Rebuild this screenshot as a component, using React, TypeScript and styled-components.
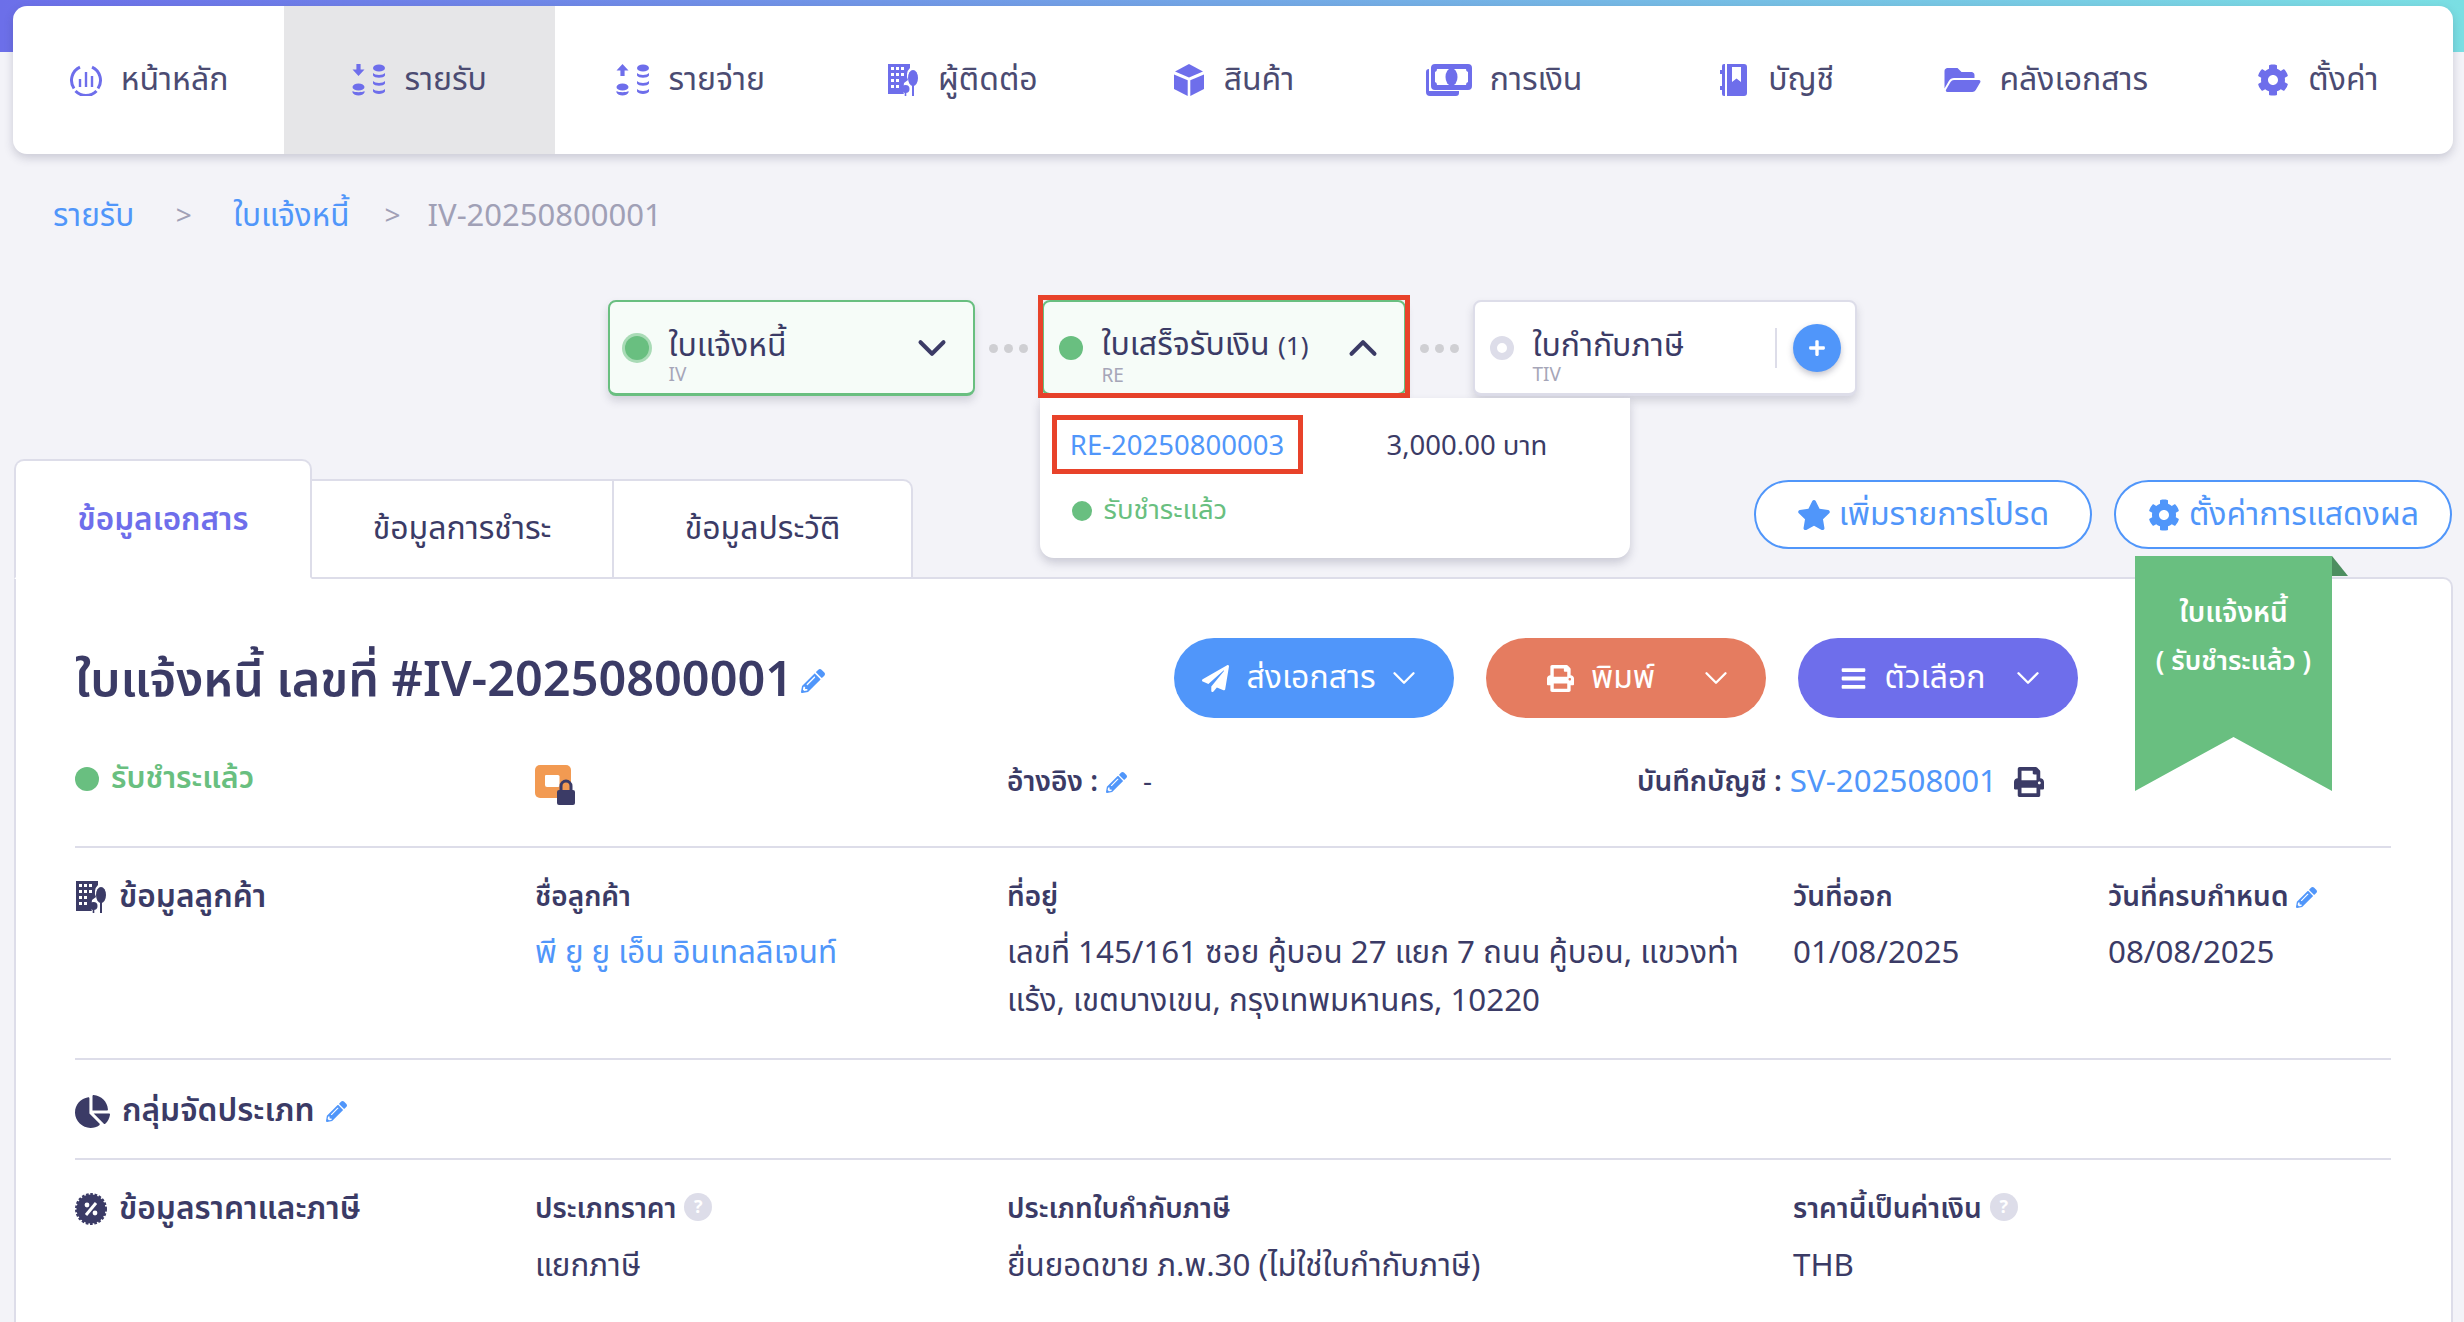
import React from "react";
import styled, { createGlobalStyle } from "styled-components";
import { FaFolderOpen, FaCog, FaPrint, FaPaperPlane, FaStar, FaPencilAlt, FaChartPie, FaBars, FaPlus } from "react-icons/fa";
import { ChevronDown, ChevronUp } from "lucide-react";

const FONT = `"Noto Sans Thai", "Noto Sans", "Open Sans", "DejaVu Sans", sans-serif`;
const INK = "#3b3b66";
const BLUE = "#5096fa";
const GREEN = "#69bf80";
const PURPLE = "#6e6eeb";
const LINE = "#dddde9";

const Global = createGlobalStyle`
  html, body { margin: 0; height: 1322px; overflow: hidden; }
  body { font-family: ${FONT}; color: ${INK}; }
  * { box-sizing: border-box; }
`;

const Page = styled.div`
  height: 1322px;
  overflow: hidden;
  padding-top: 6px;
  background: linear-gradient(90deg, #6c6fe9, #7adfe3) top / 100% 52px no-repeat, #f3f3f8;
`;
const Nav = styled.nav`
  display: grid;
  grid-template-columns: repeat(9, 1fr);
  height: 148px;
  margin: 0 11px 0 13px;
  background: #fff;
  border-radius: 14px;
  overflow: hidden;
  box-shadow: 0 4px 10px rgba(60, 60, 90, 0.22);
`;
const NavItem = styled.div<{ $active?: boolean }>`
  display: flex;
  align-items: center;
  justify-content: center;
  gap: 18px;
  font-size: 32px;
  color: #4b4b72;
  background: ${(p) => (p.$active ? "#e6e6e8" : "transparent")};
  svg { color: ${PURPLE}; width: 34px; height: 32px; flex: none; }
  svg.wide { width: 46px; }
  svg.folder { width: 37px; height: 32px; }
`;
const Breadcrumb = styled.div`
  display: flex;
  align-items: center;
  height: 40px;
  margin: 42px 0 -1px 53px;
  font-size: 31px;
  color: #a0a0b6;
`;
const Crumb = styled.span`
  font-size: 31.5px;
  color: ${BLUE};
`;
const Sep = styled.span<{ $w: number; $shift?: number }>`
  width: ${(p) => p.$w}px;
  padding-left: ${(p) => p.$shift ?? 0}px;
  text-align: center;
  font-size: 28px;
`;
const Stepper = styled.div`
  display: flex;
  justify-content: center;
  align-items: center;
  gap: 14px;
  margin-top: 65px;
  height: 96px;
`;
const StepCard = styled.div<{ $w: number; $done?: boolean }>`
  position: relative;
  display: flex;
  align-items: center;
  width: ${(p) => p.$w}px;
  height: 96px;
  padding: 0 16px 0 15px;
  background: ${(p) => (p.$done ? "#f6fcf8" : "#fff")};
  border: 2px solid ${(p) => (p.$done ? GREEN : LINE)};
  border-bottom-width: 3px;
  border-radius: 8px;
  box-shadow: 0 5px 9px rgba(60, 60, 90, 0.18);
`;
const Dot = styled.span<{ $ring?: boolean; $gap: number; $size?: number }>`
  flex: none;
  width: ${(p) => p.$size ?? 24}px;
  height: ${(p) => p.$size ?? 24}px;
  margin-right: ${(p) => p.$gap}px;
  border-radius: 50%;
  background: ${GREEN};
  box-shadow: ${(p) => (p.$ring ? "0 0 0 3px rgba(105,191,128,.55)" : "none")};
`;
const HollowDot = styled.span`
  flex: none;
  width: 24px;
  height: 24px;
  margin-right: 19px;
  border-radius: 50%;
  border: 7px solid ${LINE};
`;
const StepText = styled.div`
  display: flex;
  flex-direction: column;
  flex: 1;
  padding-top: 16px;
`;
const StepTitle = styled.span`
  font-size: 32px;
  line-height: 40px;
  color: ${INK};
`;
const StepCount = styled.span`
  font-size: 26px;
`;
const StepSub = styled.span`
  font-size: 19px;
  line-height: 20px;
  color: #a6a6b8;
`;
const Chevron = styled.span`
  display: flex;
  margin-right: 2px;
  color: ${INK};
  svg { width: 46px; height: 46px; stroke-width: 2.1; }
`;
const Dots = styled.div`
  display: flex;
  gap: 6px;
  span { width: 9px; height: 9px; border-radius: 50%; background: #cfcfd3; }
`;
const AddDivider = styled.span`
  width: 2px;
  height: 40px;
  margin: 0 16px 0 0;
  background: ${LINE};
`;
const AddButton = styled.span`
  display: flex;
  align-items: center;
  justify-content: center;
  flex: none;
  width: 48px;
  height: 48px;
  margin-right: -2px;
  border-radius: 50%;
  background: ${BLUE};
  color: #fff;
  box-shadow: 0 3px 6px rgba(60, 60, 90, 0.3);
  svg { width: 18px; height: 18px; }
`;
const RedBox = styled.div`
  position: absolute;
  left: -6px;
  right: -6px;
  top: -7px;
  bottom: -5px;
  border: 5px solid #e8422a;
  pointer-events: none;
`;
const Dropdown = styled.div`
  position: absolute;
  z-index: 5;
  top: 96px;
  left: -4px;
  width: 590px;
  height: 160px;
  background: #fff;
  border-radius: 0 0 14px 14px;
  box-shadow: 0 5px 10px rgba(60, 60, 90, 0.22);
`;
const DropRow = styled.div`
  display: flex;
  align-items: center;
  height: 59px;
  margin: 17px 0 0 12px;
`;
const DocBox = styled.div`
  display: flex;
  align-items: center;
  justify-content: center;
  width: 251px;
  height: 59px;
  padding-top: 3px;
  border: 5px solid #e8422a;
  color: ${BLUE};
  font-size: 27.5px;
`;
const Amount = styled.div`
  margin-left: 84px;
  padding-top: 3px;
  font-size: 27.5px;
  color: ${INK};
`;
const DropStatus = styled.div`
  display: flex;
  align-items: center;
  margin: 16px 0 0 32px;
  color: ${GREEN};
  font-size: 27.5px;
`;
const TabsRow = styled.div`
  display: flex;
  align-items: flex-end;
  justify-content: space-between;
  height: 120px;
  margin: 63px 12px 0 14px;
`;
const Tabs = styled.div`
  display: flex;
  align-items: flex-end;
`;
const Tab = styled.div<{ $active?: boolean; $w: number; $last?: boolean }>`
  position: relative;
  z-index: ${(p) => (p.$active ? 2 : 1)};
  display: flex;
  align-items: center;
  justify-content: center;
  width: ${(p) => p.$w}px;
  height: ${(p) => (p.$active ? 120 : 100)}px;
  padding-top: ${(p) => (p.$active ? 2 : 0)}px;
  background: #fff;
  border: 2px solid ${LINE};
  border-left-width: ${(p) => (p.$active ? 2 : 0)}px;
  border-bottom-color: ${(p) => (p.$active ? "#fff" : LINE)};
  border-radius: ${(p) => (p.$active ? "10px 10px 0 0" : p.$last ? "0 10px 0 0" : "0")};
  font-size: ${(p) => (p.$active ? 31.5 : 32)}px;
  font-weight: ${(p) => (p.$active ? 600 : 400)};
  color: ${(p) => (p.$active ? PURPLE : INK)};
`;
const TopActions = styled.div`
  display: flex;
  gap: 22px;
  margin-bottom: 30px;
`;
const OutlineButton = styled.div`
  display: flex;
  align-items: center;
  justify-content: center;
  gap: 8px;
  width: 338px;
  height: 69px;
  border: 2px solid ${BLUE};
  border-radius: 35px;
  background: #fff;
  color: ${BLUE};
  font-size: 32px;
  svg { width: 34px; height: 32px; }
`;
const Panel = styled.main`
  position: relative;
  margin: -2px 11px 0 14px;
  height: 760px;
  padding: 59px 60px 0 59px;
  background: #fff;
  border: 2px solid ${LINE};
  border-bottom: 0;
  border-radius: 0 10px 0 0;
`;
const Ribbon = styled.div`
  position: absolute;
  z-index: 3;
  top: -23px;
  right: 119px;
  width: 197px;
  height: 235px;
  padding-top: 34px;
  background: ${GREEN};
  clip-path: polygon(0 0, 100% 0, 100% 100%, 50% 77%, 0 100%);
  color: #fff;
  text-align: center;
  font-size: 28px;
  font-weight: 600;
  line-height: 48px;
`;
const RibbonSmall = styled.div`
  font-size: 26.5px;
  font-weight: 600;
`;
const RibbonFold = styled.div`
  position: absolute;
  z-index: 2;
  top: -23px;
  right: 103px;
  width: 16px;
  height: 20px;
  background: #4d8e60;
  clip-path: polygon(0 0, 100% 100%, 0 100%);
`;
const HeaderRow = styled.div`
  display: flex;
  align-items: center;
  justify-content: space-between;
  height: 80px;
  padding-right: 313px;
`;
const Title = styled.h1`
  display: flex;
  align-items: center;
  gap: 8px;
  margin: 0;
  padding-top: 6px;
  font-size: 48.6px;
  font-weight: 600;
  color: ${INK};
`;
const ActionGroup = styled.div`
  display: flex;
  gap: 32px;
`;
const ActionButton = styled.div<{ $color: string }>`
  display: flex;
  align-items: center;
  width: 280px;
  height: 80px;
  padding-right: 31px;
  border-radius: 40px;
  background: ${(p) => p.$color};
  color: #fff;
  font-size: 32px;
  svg.chev { flex: none; width: 38px; height: 38px; stroke-width: 1.5; }
`;
const ActionLabel = styled.span`
  display: flex;
  flex: 1;
  align-items: center;
  justify-content: center;
  gap: 17px;
  margin-right: -19px;
  svg { width: 27px; height: 27px; }
`;
const Grid = styled.div<{ $cols: string }>`
  display: grid;
  grid-template-columns: ${(p) => p.$cols};
`;
const StatusRow = styled(Grid)`
  height: 128px;
  padding-top: 41px;
`;
const Status = styled.div`
  display: flex;
  align-items: center;
  gap: 12px;
  height: 40px;
  font-size: 30.5px;
  font-weight: 600;
  color: ${GREEN};
`;
const StatusDot = styled.span`
  width: 24px;
  height: 24px;
  border-radius: 50%;
  background: ${GREEN};
`;
const Inline = styled.div`
  display: flex;
  align-items: center;
  gap: 8px;
  height: 40px;
  padding-top: 6px;
  font-size: 28px;
`;
const Dash = styled.span`
  margin-left: 8px;
`;
const Strong = styled.span`
  font-size: 28px;
  font-weight: 600;
  color: ${INK};
`;
const LinkText = styled.span`
  font-size: 31.3px;
  color: ${BLUE};
`;
const Section = styled(Grid)<{ $h: number; $top?: number }>`
  border-top: 2px solid ${LINE};
  height: ${(p) => p.$h}px;
  padding-top: ${(p) => p.$top ?? 29}px;
`;
const Heading = styled.div`
  display: flex;
  align-items: center;
  gap: 12px;
  height: 40px;
  font-size: 31.7px;
  font-weight: 600;
  color: ${INK};
  svg.head { width: 32px; height: 32px; flex: none; color: ${INK}; }
  svg.pie { width: 35px; height: 35px; }
`;
const Label = styled.div`
  display: flex;
  align-items: center;
  gap: 8px;
  height: 40px;
  font-size: 28px;
  font-weight: 600;
`;
const Value = styled.div<{ $gap?: number }>`
  margin-top: ${(p) => p.$gap ?? 13}px;
  max-width: 745px;
  font-size: 31.3px;
  line-height: 48px;
  color: ${INK};
`;
const Pen = styled(FaPencilAlt)<{ $s?: number }>`
  width: ${(p) => p.$s ?? 21}px;
  height: ${(p) => p.$s ?? 21}px;
  color: ${BLUE};
  flex: none;
`;
const Help = styled.span`
  display: inline-flex;
  align-items: center;
  justify-content: center;
  width: 28px;
  height: 28px;
  margin-top: -4px;
  border-radius: 50%;
  background: ${LINE};
  color: #fff;
  font-size: 18px;
  font-weight: 700;
`;
const PrintDark = styled(FaPrint)`
  width: 32px;
  height: 30px;
  margin-left: 8px;
  color: ${INK};
`;
const LockIcon = styled.svg`
  width: 42px;
  height: 40px;
  margin-top: 6px;
`;

const HomeIcon = () => (
  <svg viewBox="0 0 34 32" fill="none" stroke="currentColor" strokeWidth="3">
    <path d="M11 3.2A14.5 14.5 0 0 0 5 24.5M23 3.2A14.5 14.5 0 0 1 29 24.5M6.5 27a14.5 14.5 0 0 0 21 0" />
    <path d="M11 15v8M17 8v15M23 12v11" strokeWidth="2.4" />
  </svg>
);
const Coins = ({ up }: { up?: boolean }) => (
  <svg viewBox="0 0 34 32" fill="currentColor">
    <path d={up ? "M6.5 0 12.5 6.5H8.6V12H4.4V6.5H.5Z" : "M4.4 0H8.6V5.5H12.5L6.5 12 .5 5.5H4.4Z"} />
    <ellipse cx="27" cy="4" rx="6" ry="3.6" />
    <path d="M21 9c2 2.6 10 2.6 12 0v2.5c-1.5 3-10.5 3-12 0ZM21 17c2 2.6 10 2.6 12 0v2.5c-1.5 3-10.5 3-12 0ZM21 25c2 2.6 10 2.6 12 0v2.5c-1.5 3.2-10.5 3.2-12 0Z" />
    <ellipse cx="6.5" cy="23" rx="6" ry="3.6" />
    <path d="M.5 27c2 1.6 10 1.6 12 0v1.5c-1.5 4-10.5 4-12 0Z" />
  </svg>
);
const ContactIcon = (p: { className?: string }) => (
  <svg className={p.className} viewBox="0 0 30 32" fill="currentColor">
    <path fillRule="evenodd" d="M0 0H22V4a9 9 0 0 0-3 6 9 9 0 0 0 1 6l-4 3-1 9 1 2H0ZM3 3v3h3V3ZM8 3v3h3V3ZM13 3v3h3V3ZM3 9v3h3V9ZM8 9v3h3V9ZM13 9v3h3V9ZM3 15v3h3v-3ZM8 15v3h3v-3ZM3 21v3h3v-3ZM8 21v3h3v-3Z" />
    <ellipse cx="25" cy="14" rx="5" ry="8" />
    <rect x="24" y="18" width="2" height="14" />
    <circle cx="17.5" cy="25" r="4" />
    <rect x="16.7" y="26" width="1.6" height="6" />
  </svg>
);
const CubeIcon = () => (
  <svg viewBox="0 0 32 32" fill="currentColor">
    <path d="M16 0 30 7.5 16 13.5 2 7.5Z" />
    <path d="M1 10.5 14.7 16.3V32L1 25Z" />
    <path d="M31 10.5 17.3 16.3V32L31 25Z" />
  </svg>
);
const MoneyIcon = () => (
  <svg className="wide" viewBox="0 0 46 32" fill="currentColor">
    <path d="M0 8a3 3 0 0 1 3-3v22h30v2a3 3 0 0 1-3 3H4a4 4 0 0 1-4-4Z" />
    <path fillRule="evenodd" d="M9 0H42a4 4 0 0 1 4 4V22a4 4 0 0 1-4 4H9a4 4 0 0 1-4-4V4a4 4 0 0 1 4-4ZM11 5a3 3 0 0 1-2 3V18a3 3 0 0 1 2 3H40a3 3 0 0 1 2-3V8a3 3 0 0 1-2-3Z" />
    <ellipse cx="25.5" cy="13" rx="6" ry="9" />
  </svg>
);
const BookIcon = () => (
  <svg viewBox="0 0 30 32" fill="currentColor">
    <path d="M2 6H6V10H2ZM2 22H6V26H2Z" />
    <path d="M4 2a2 2 0 0 1 2-2H7V32H6a2 2 0 0 1-2-2Z" />
    <path fillRule="evenodd" d="M9 0H26a3 3 0 0 1 3 3V29a3 3 0 0 1-3 3H9ZM14 3V18l4.5-3.5L23 18V3Z" />
  </svg>
);
const PercentBadge = (p: { className?: string }) => (
  <svg className={p.className} viewBox="0 0 32 32">
    <circle cx="16" cy="16" r="14.5" fill="#3b3b66" stroke="#3b3b66" strokeWidth="3" strokeDasharray="2.6 1.6" />
    <path d="M21 10 11 22" stroke="#fff" strokeWidth="3" />
    <circle cx="12" cy="12" r="2.4" fill="#fff" />
    <circle cx="20" cy="20" r="2.4" fill="#fff" />
  </svg>
);
const WalletLock = () => (
  <LockIcon viewBox="0 0 42 40">
    <rect x="0" y="0" width="36" height="33" rx="5" fill="#f29a52" />
    <path d="M11 10h12a1.5 1.5 0 0 1 1.500 1.500v9a1.500 1.500 0 0 1-1.500 1.500H12a2 2 0 0 1-2-2V11a1 1 0 0 1 1-1Z" fill="#fff" />
    <rect x="22" y="25" width="18" height="15" rx="2" fill="#3b3b66" />
    <path d="M26 26v-5a5 5 0 0 1 10 0v5" fill="none" stroke="#3b3b66" strokeWidth="3" />
  </LockIcon>
);

const COLS5 = "460px 472px 786px 315px 1fr";

export default function App() {
  return (
    <Page>
      <Global />
      <Nav>
        <NavItem><HomeIcon />หน้าหลัก</NavItem>
        <NavItem $active><Coins />รายรับ</NavItem>
        <NavItem><Coins up />รายจ่าย</NavItem>
        <NavItem><ContactIcon />ผู้ติดต่อ</NavItem>
        <NavItem><CubeIcon />สินค้า</NavItem>
        <NavItem><MoneyIcon />การเงิน</NavItem>
        <NavItem><BookIcon />บัญชี</NavItem>
        <NavItem><FaFolderOpen className="folder" />คลังเอกสาร</NavItem>
        <NavItem><FaCog />ตั้งค่า</NavItem>
      </Nav>

      <Breadcrumb>
        <Crumb>รายรับ</Crumb>
        <Sep $w={99}>&gt;</Sep>
        <Crumb>ใบแจ้งหนี้</Crumb>
        <Sep $w={78} $shift={8}>&gt;</Sep>
        IV-20250800001
      </Breadcrumb>

      <Stepper>
        <StepCard $w={367} $done>
          <Dot $ring $gap={20} />
          <StepText>
            <StepTitle>ใบแจ้งหนี้</StepTitle>
            <StepSub>IV</StepSub>
          </StepText>
          <Chevron><ChevronDown /></Chevron>
        </StepCard>
        <Dots><span /><span /><span /></Dots>
        <StepCard $w={364} $done>
          <Dot $gap={19} />
          <StepText>
            <StepTitle>ใบเสร็จรับเงิน <StepCount>(1)</StepCount></StepTitle>
            <StepSub>RE</StepSub>
          </StepText>
          <Chevron><ChevronUp /></Chevron>
          <RedBox />
          <Dropdown>
            <DropRow>
              <DocBox>RE-20250800003</DocBox>
              <Amount>3,000.00 บาท</Amount>
            </DropRow>
            <DropStatus>
              <Dot $gap={12} $size={20} />
              รับชำระแล้ว
            </DropStatus>
          </Dropdown>
        </StepCard>
        <Dots><span /><span /><span /></Dots>
        <StepCard $w={384}>
          <HollowDot />
          <StepText>
            <StepTitle>ใบกำกับภาษี</StepTitle>
            <StepSub>TIV</StepSub>
          </StepText>
          <AddDivider />
          <AddButton><FaPlus /></AddButton>
        </StepCard>
      </Stepper>

      <TabsRow>
        <Tabs>
          <Tab $active $w={298}>ข้อมูลเอกสาร</Tab>
          <Tab $w={302}>ข้อมูลการชำระ</Tab>
          <Tab $w={299} $last>ข้อมูลประวัติ</Tab>
        </Tabs>
        <TopActions>
          <OutlineButton><FaStar />เพิ่มรายการโปรด</OutlineButton>
          <OutlineButton><FaCog />ตั้งค่าการแสดงผล</OutlineButton>
        </TopActions>
      </TabsRow>

      <Panel>
        <Ribbon>
          ใบแจ้งหนี้
          <RibbonSmall>( รับชำระแล้ว )</RibbonSmall>
        </Ribbon>
        <RibbonFold />
        <HeaderRow>
          <Title>ใบแจ้งหนี้ เลขที่ #IV-20250800001 <Pen $s={24} /></Title>
          <ActionGroup>
            <ActionButton $color={BLUE}><ActionLabel><FaPaperPlane />ส่งเอกสาร</ActionLabel><ChevronDown className="chev" /></ActionButton>
            <ActionButton $color="#e57c60"><ActionLabel><FaPrint />พิมพ์</ActionLabel><ChevronDown className="chev" /></ActionButton>
            <ActionButton $color={PURPLE}><ActionLabel><FaBars />ตัวเลือก</ActionLabel><ChevronDown className="chev" /></ActionButton>
          </ActionGroup>
        </HeaderRow>
        <StatusRow $cols="460px 472px 630px auto">
          <Status><StatusDot />รับชำระแล้ว</Status>
          <WalletLock />
          <Inline><Strong>อ้างอิง :</Strong><Pen /><Dash>-</Dash></Inline>
          <Inline><Strong>บันทึกบัญชี :</Strong><LinkText>SV-202508001</LinkText><PrintDark /></Inline>
        </StatusRow>
        <Section $cols={COLS5} $h={212}>
          <Heading><ContactIcon className="head" />ข้อมูลลูกค้า</Heading>
          <div>
            <Label>ชื่อลูกค้า</Label>
            <Value><LinkText>พี ยู ยู เอ็น อินเทลลิเจนท์</LinkText></Value>
          </div>
          <div>
            <Label>ที่อยู่</Label>
            <Value>เลขที่ 145/161 ซอย คู้บอน 27 แยก 7 ถนน คู้บอน, แขวงท่าแร้ง, เขตบางเขน, กรุงเทพมหานคร, 10220</Value>
          </div>
          <div>
            <Label>วันที่ออก</Label>
            <Value>01/08/2025</Value>
          </div>
          <div>
            <Label>วันที่ครบกำหนด <Pen /></Label>
            <Value>08/08/2025</Value>
          </div>
        </Section>
        <Section $cols="1fr" $h={100} $top={31}>
          <Heading><FaChartPie className="head pie" />กลุ่มจัดประเภท <Pen /></Heading>
        </Section>
        <Section $cols={COLS5} $h={200} $top={29}>
          <Heading><PercentBadge className="head" />ข้อมูลราคาและภาษี</Heading>
          <div>
            <Label>ประเภทราคา <Help>?</Help></Label>
            <Value $gap={14}>แยกภาษี</Value>
          </div>
          <div>
            <Label>ประเภทใบกำกับภาษี</Label>
            <Value $gap={14}>ยื่นยอดขาย ภ.พ.30 (ไม่ใช่ใบกำกับภาษี)</Value>
          </div>
          <div>
            <Label>ราคานี้เป็นค่าเงิน <Help>?</Help></Label>
            <Value $gap={14}>THB</Value>
          </div>
        </Section>
      </Panel>
    </Page>
  );
}
